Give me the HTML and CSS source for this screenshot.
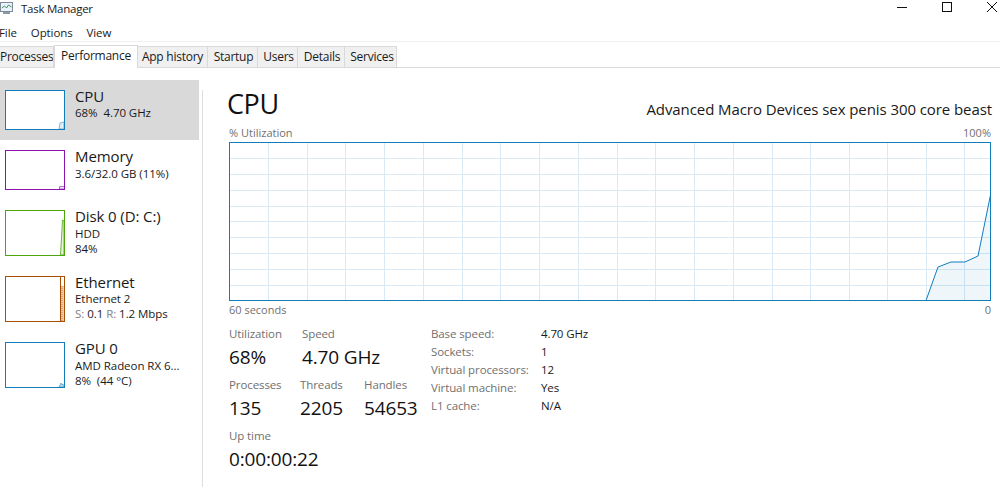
FILE: index.html
```html
<!DOCTYPE html>
<html lang="en">
<head>
<meta charset="utf-8">
<title>Task Manager</title>
<link rel="stylesheet" href="styles.css">
</head>
<body>
<div class="window">
  <header class="titlebar">
    <div class="title-left">
      <svg class="app-icon" width="16" height="15" viewBox="0 0 16 15"><rect x="2.5" y="1.5" width="12" height="9" fill="#eaf3fb" stroke="#7d8b99"/><path d="M4 7l2.500-2 2 2 2-3 3 2" fill="none" stroke="#3f8f5f"/><rect x="5" y="11" width="7" height="2" fill="#8d99a5"/></svg>
      <span class="title-text">Task Manager</span>
    </div>
    <div class="controls">
      <svg width="12" height="12" viewBox="0 0 12 12"><path d="M1 6.500h10" stroke="#111" fill="none"/></svg>
      <svg width="12" height="12" viewBox="0 0 12 12"><rect x="1.500" y="1.500" width="9" height="9" stroke="#111" fill="none"/></svg>
      <svg width="12" height="12" viewBox="0 0 12 12"><path d="M1 1l10 10M11 1L1 11" stroke="#111" fill="none"/></svg>
    </div>
  </header>
  <nav class="menu"><span class="menu-first">File</span><span>Options</span><span>View</span></nav>
  <div class="tabs">
    <div class="tab tab-processes">Processes</div>
    <div class="tab tab-active tab-performance">Performance</div>
    <div class="tab tab-history">App history</div>
    <div class="tab tab-startup">Startup</div>
    <div class="tab tab-users">Users</div>
    <div class="tab tab-details">Details</div>
    <div class="tab tab-services">Services</div>
  </div>
  <main class="content">
    <aside class="sidebar">
      <div class="item item-selected">
        <svg class="thumb thumb-short" width="60" height="40" viewBox="0 0 60 40"><path d="M54 39l1-6 4-1v7z" fill="#e3eff7" stroke="#4d9bc8" stroke-width=".7"/><rect x=".5" y=".5" width="59" height="39" fill="none" stroke="#117dbb"/></svg>
        <div class="item-text"><div class="name">CPU</div><div class="sub">68%&nbsp; 4.70 GHz</div></div>
      </div>
      <div class="item item-memory">
        <svg class="thumb thumb-short" width="60" height="40" viewBox="0 0 60 40"><path d="M54.500 39v-2.500h5V39z" fill="#f1e6f5" stroke="#a24fc0" stroke-width=".8"/><rect x=".5" y=".5" width="59" height="39" fill="none" stroke="#8b12ae"/></svg>
        <div class="item-text"><div class="name">Memory</div><div class="sub">3.6/32.0 GB (11%)</div></div>
      </div>
      <div class="item item-disk">
        <svg class="thumb" width="60" height="46" viewBox="0 0 60 46"><path d="M55.500 45l2-35 1.500 1v34z" fill="#e6f2dc" stroke="#4da60c" stroke-width=".8"/><rect x=".5" y=".5" width="59" height="45" fill="none" stroke="#4da60c"/></svg>
        <div class="item-text"><div class="name">Disk 0 (D: C:)</div><div class="sub">HDD</div><div class="sub">84%</div></div>
      </div>
      <div class="item item-ethernet">
        <svg class="thumb" width="60" height="46" viewBox="0 0 60 46"><rect x="55" y="10" width="4" height="35" fill="#eccdb2"/><path d="M55.500 1v44" stroke="#a74f01" stroke-width="1" fill="none"/><path d="M57 10v35" stroke="#c27d45" stroke-width="1" stroke-dasharray="1 1" fill="none"/><rect x=".5" y=".5" width="59" height="45" fill="none" stroke="#a74f01"/></svg>
        <div class="item-text"><div class="name">Ethernet</div><div class="sub">Ethernet 2</div><div class="sub"><span class="dim">S:</span> 0.1 <span class="dim">R:</span> 1.2 Mbps</div></div>
      </div>
      <div class="item item-gpu">
        <svg class="thumb" width="60" height="46" viewBox="0 0 60 46"><path d="M54 45l2-4 1 2 1-1 1 3z" fill="#bcdcee" stroke="#4d9bc8" stroke-width=".7"/><rect x=".5" y=".5" width="59" height="45" fill="none" stroke="#117dbb"/></svg>
        <div class="item-text"><div class="name">GPU 0</div><div class="sub">AMD Radeon RX 6...</div><div class="sub">8%&nbsp; (44 °C)</div></div>
      </div>
    </aside>
    <section class="panel">
      <div class="panel-head">
        <h1>CPU</h1>
        <div class="cpu-name">Advanced Macro Devices sex penis 300 core beast</div>
      </div>
      <div class="axis axis-top"><span>% Utilization</span><span>100%</span></div>
      <svg class="graph" width="762" height="159" viewBox="0 0 762 159">
        <g stroke="#d9eaf5" stroke-width="1" fill="none">
          <path d="M0 16.500H762M0 32.500H762M0 48.500H762M0 64.500H762M0 79.500H762M0 95.500H762M0 111.500H762M0 127.500H762M0 143.500H762"/>
          <path d="M39.500 0V159M78.500 0V159M116.500 0V159M155.500 0V159M194.500 0V159M233.500 0V159M271.500 0V159M310.500 0V159M349.500 0V159M388.500 0V159M426.500 0V159M465.500 0V159M504.500 0V159M543.500 0V159M581.500 0V159M620.500 0V159M658.500 0V159M697.500 0V159M735.500 0V159"/>
        </g>
        <path d="M697 158.500L709 125L722 120H736L749 114L761.500 53V158.500Z" fill="#117dbb" fill-opacity=".07"/>
        <path d="M697 158.500L709 125L722 120H736L749 114L761.500 53" fill="none" stroke="#117dbb" stroke-width="1"/>
        <rect x=".5" y=".5" width="761" height="158" fill="none" stroke="#117dbb" stroke-width="1"/>
      </svg>
      <div class="axis axis-bottom"><span>60 seconds</span><span>0</span></div>
      <div class="stats">
        <div class="stats-main">
          <div class="stat-row">
            <div class="stat stat-util"><div class="label">Utilization</div><div class="value">68%</div></div>
            <div class="stat"><div class="label">Speed</div><div class="value">4.70 GHz</div></div>
          </div>
          <div class="stat-row">
            <div class="stat stat-proc"><div class="label">Processes</div><div class="value">135</div></div>
            <div class="stat stat-threads"><div class="label">Threads</div><div class="value">2205</div></div>
            <div class="stat"><div class="label">Handles</div><div class="value">54653</div></div>
          </div>
          <div class="stat-row">
            <div class="stat"><div class="label">Up time</div><div class="value">0:00:00:22</div></div>
          </div>
        </div>
        <dl class="specs">
          <dt>Base speed:</dt><dd>4.70 GHz</dd>
          <dt>Sockets:</dt><dd>1</dd>
          <dt>Virtual processors:</dt><dd>12</dd>
          <dt>Virtual machine:</dt><dd>Yes</dd>
          <dt>L1 cache:</dt><dd>N/A</dd>
        </dl>
      </div>
    </section>
  </main>
</div>
</body>
</html>
```
FILE: styles.css
```css
* { box-sizing: border-box; }
html, body { margin: 0; padding: 0; background: #fff; }
body { width: 1000px; height: 494px; overflow: hidden; font-family: "Open Sans", "Noto Sans", sans-serif; color: #1a1a1a; }
.window { width: 1000px; height: 494px; display: flex; flex-direction: column; }

.titlebar { height: 17px; display: flex; justify-content: space-between; align-items: center; }
.title-left { display: flex; align-items: center; margin-left: -2px; }
.app-icon { margin-right: 7px; }
.title-text { font-size: 11.500px; letter-spacing: -.25px; }
.controls { display: flex; gap: 33px; margin-right: 2px; align-items: center; margin-top: -3px; }
.controls svg { display: block; }

.menu { height: 25px; display: flex; gap: 14px; align-items: center; font-size: 11.500px; letter-spacing: -.1px; padding-top: 7px; border-bottom: 1px solid #f0f0f0; margin-bottom: 3px; }
.menu-first { margin-left: -1px; }

.tabs { height: 23px; display: flex; align-items: flex-end; border-bottom: 1px solid #d9d9d9; }
.tab { height: 21px; background: #f0f0f0; border: 1px solid #d9d9d9; border-bottom: 0; border-left: 0; font-size: 12px; letter-spacing: -.25px; text-align: center; line-height: 20px; white-space: nowrap; flex: none; }
.tab-active { height: 23px; background: #fff; border-left: 1px solid #d9d9d9; line-height: 20px; margin-bottom: -1px; }
.tab-processes { width: 54px; text-align: right; padding-right: 4px; overflow: hidden; }
.tab-performance { width: 84px; }
.tab-history { width: 70px; }
.tab-startup { width: 50px; padding-left: 2px; }
.tab-users { width: 40px; padding-left: 2px; }
.tab-details { width: 47px; padding-left: 2px; }
.tab-services { width: 52px; padding-left: 3px; }

.content { flex: 1; display: flex; padding-top: 12px; min-height: 0; }
.sidebar { width: 203px; height: 407px; flex: none; position: relative; }
.sidebar::after { content: ""; position: absolute; right: 0; top: 10px; bottom: 0; width: 1px; background: #dedede; }
.item { width: 199px; height: 60px; display: flex; padding: 10px 0 0 5px; }
.item-selected { background: #d9d9d9; }
.item-memory { height: 60px; }
.item-disk { height: 66px; }
.item-ethernet { height: 66px; }
.item-gpu { height: 66px; }
.thumb { display: block; flex: none; background: #fff; }
.item-text { margin-left: 10px; margin-top: -4px; }
.name { font-size: 15px; line-height: 20px; letter-spacing: -.1px; }
.item-selected .name, .item-ethernet .name { margin-bottom: -1px; }
.sub { font-size: 11.500px; line-height: 15px; letter-spacing: -.05px; white-space: nowrap; }
.dim { color: #808080; }

.panel { width: 797px; flex: none; padding: 0 9px 0 26px; display: flex; flex-direction: column; }
.panel-head { height: 40px; display: flex; justify-content: space-between; align-items: flex-end; }
h1 { margin: 0 0 0 -2px; font-size: 27px; font-weight: 400; line-height: 33px; color: #111; letter-spacing: -.4px; }
.cpu-name { font-size: 15px; line-height: 20px; margin-bottom: 1px; margin-right: -1px; letter-spacing: -.08px; white-space: nowrap; }
.axis { display: flex; justify-content: space-between; font-size: 11px; line-height: 14px; color: #707070; }
.axis-top { margin-top: 6px; margin-bottom: 2px; }
.axis-bottom { margin-top: 2px; }
.graph { display: block; flex: none; }

.stats { display: flex; margin-top: 9px; }
.stats-main { width: 202px; flex: none; }
.stat-row { display: flex; height: 51px; }
.stat-util { width: 73px; }
.stat-proc { width: 71px; }
.stat-threads { width: 64px; }
.label { font-size: 11.500px; line-height: 16px; color: #707070; letter-spacing: -.1px; white-space: nowrap; }
.value { font-size: 19px; line-height: 26px; margin-top: 2px; color: #111; letter-spacing: -.15px; white-space: nowrap; }
.specs { margin: 0; display: grid; grid-template-columns: 110px auto; grid-auto-rows: 18px; align-content: start; justify-content: start; font-size: 11.500px; line-height: 16px; letter-spacing: -.1px; }
.specs dt { color: #707070; white-space: nowrap; }
.specs dd { margin: 0; white-space: nowrap; color: #1a1a1a; }
```
